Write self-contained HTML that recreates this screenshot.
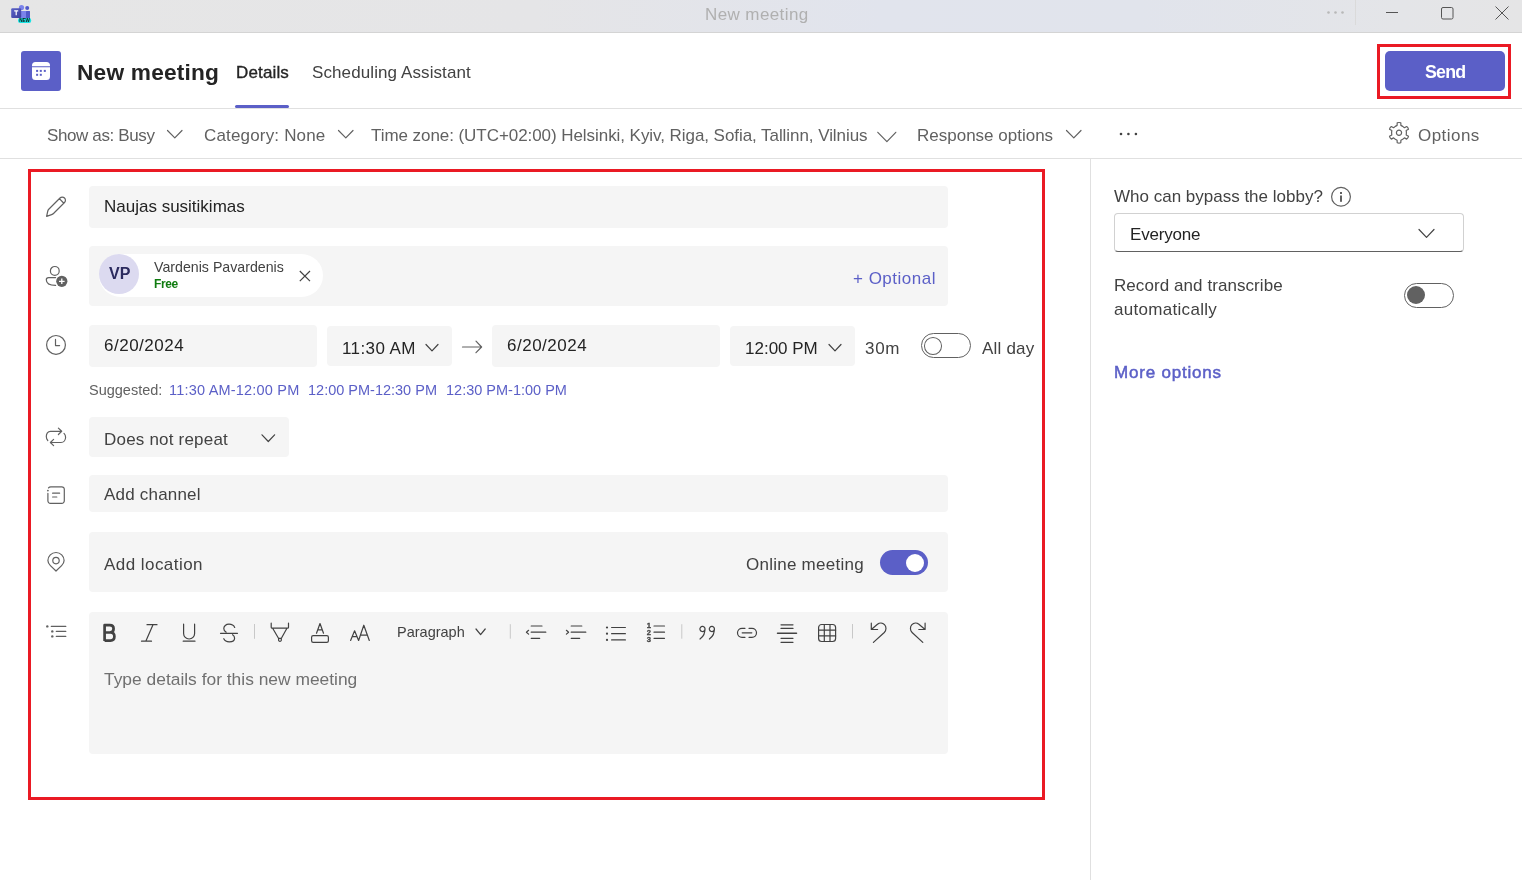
<!DOCTYPE html>
<html><head><meta charset="utf-8">
<style>
*{box-sizing:border-box;margin:0;padding:0}
html,body{-webkit-font-smoothing:antialiased;width:1522px;height:880px;overflow:hidden;background:#fff;font-family:"Liberation Sans",sans-serif;color:#242424}
.a{position:absolute}
.t{position:absolute;white-space:nowrap;line-height:1;will-change:transform}
svg{position:absolute;overflow:visible;left:0;top:0}
.inp{position:absolute;background:#f5f5f5;border-radius:4px}
.tb{font-size:17px;color:#616161;top:127px}
.st{fill:none;stroke:#616161;stroke-width:1.2;stroke-linecap:round;stroke-linejoin:round}
.sd{fill:none;stroke:#424242;stroke-width:1.2;stroke-linecap:round;stroke-linejoin:round}
.lk{font-size:14.5px;color:#5b5fc7;top:383.2px}
</style></head><body>

<!-- title bar -->
<div class="a" style="left:0;top:0;width:1522px;height:33px;background:linear-gradient(90deg,#e6e6e6 0%,#e5e5e7 35%,#e1e4ed 58%,#e1e4ec 75%,#e4e5e8 92%,#e5e5e6 100%);border-bottom:1px solid #d4d4d4"></div>
<div class="t" style="left:705px;top:5.8px;font-size:17px;letter-spacing:0.4px;color:#b0b0b0">New meeting</div>

<svg width="1522" height="880">
  <!-- teams logo -->
  <circle cx="21.5" cy="7.5" r="2.6" fill="#7b83eb"/>
  <circle cx="27.2" cy="8" r="2" fill="#5059c9"/>
  <rect x="20" y="11" width="10" height="7.5" rx="1" fill="#7b83eb"/>
  <rect x="26" y="11" width="4" height="7.5" rx="0.8" fill="#5059c9"/>
  <defs><linearGradient id="tg" x1="0" y1="0" x2="1" y2="1"><stop offset="0" stop-color="#5a62c8"/><stop offset="1" stop-color="#3d3f9c"/></linearGradient></defs><rect x="11.2" y="8.2" width="10" height="9.8" rx="1.2" fill="url(#tg)"/>
  <path d="M14.2 10.8 H18.2 M16.2 10.8 V15.2" stroke="#fff" stroke-width="1.2"/>
  <rect x="18" y="18" width="13.2" height="5" rx="2.2" fill="#19e3e3"/>
  <text x="24.6" y="22.3" font-size="4.6" font-weight="700" text-anchor="middle" fill="#111" font-family="Liberation Sans">NEW</text>

  <!-- window controls -->
  <circle cx="1328.5" cy="12.5" r="1.3" fill="#b8b8b8"/>
  <circle cx="1335.5" cy="12.5" r="1.3" fill="#b8b8b8"/>
  <circle cx="1342.5" cy="12.5" r="1.3" fill="#b8b8b8"/>
  <line x1="1355.5" y1="0" x2="1355.5" y2="25" stroke="#dadada" stroke-width="1"/>
  <line x1="1386" y1="12.5" x2="1398" y2="12.5" stroke="#555" stroke-width="1"/>
  <rect x="1441.5" y="7.5" width="11.5" height="11.5" rx="1.5" fill="none" stroke="#555" stroke-width="1"/>
  <path d="M1495.5 6.5 L1508.5 19.5 M1508.5 6.5 L1495.5 19.5" stroke="#555" stroke-width="1"/>

  <!-- header calendar icon -->
  <rect x="21" y="51" width="40" height="40" rx="3" fill="#5b5fc7"/>
  <path d="M32 66.2 V65.5 A3.5 3.5 0 0 1 35.5 62 H46.5 A3.5 3.5 0 0 1 50 65.5 V66.2 Z" fill="#fff"/>
  <path d="M32 67.2 H50 V76.5 A3.5 3.5 0 0 1 46.5 80 H35.5 A3.5 3.5 0 0 1 32 76.5 Z" fill="#fff"/>
  <g fill="#5b5fc7"><rect x="36.1" y="69.9" width="2" height="2"/><rect x="39.8" y="69.9" width="2" height="2"/><rect x="43.8" y="69.9" width="2" height="2"/><rect x="36.1" y="73.8" width="2" height="2"/><rect x="39.8" y="73.8" width="2" height="2"/></g>

  <!-- toolbar chevrons -->
  <polyline class="st" points="167.5,130.5 174.8,137.8 182,130.5"/>
  <polyline class="st" points="338.5,130.5 345.8,137.8 353,130.5"/>
  <polyline class="st" points="877.8,132.3 886.9,141.6 895.8,132.3"/>
  <polyline class="st" points="1066.5,130.5 1073.8,137.8 1081,130.5"/>
  <circle cx="1121" cy="134" r="1.3" fill="#424242"/>
  <circle cx="1128.4" cy="134" r="1.3" fill="#424242"/>
  <circle cx="1135.9" cy="134" r="1.3" fill="#424242"/>
  <!-- gear -->
  <g transform="translate(1399,132.8)">
    <path class="st" d="M-3.70 -6.41 L-1.9 -7.4 L-1.8 -10.0 Q0 -10.6 1.8 -10.0 L1.9 -7.4 L3.70 -6.41 L5.41 -5.05 L7.7 -6.3 Q9.3 -5.2 9.5 -3.5 L7.2 -2.2 L7.40 0.00 L7.2 2.2 L9.5 3.5 Q9.3 5.2 7.7 6.3 L5.41 5.05 L3.70 6.41 L1.9 7.4 L1.8 10.0 Q0 10.6 -1.8 10.0 L-1.9 7.4 L-3.70 6.41 L-5.41 5.05 L-7.7 6.3 Q-9.3 5.2 -9.5 3.5 L-7.2 2.2 L-7.40 0 L-7.2 -2.2 L-9.5 -3.5 Q-9.3 -5.2 -7.7 -6.3 L-5.41 -5.05 Z"/>
    <circle class="st" cx="0" cy="0" r="2.6"/>
  </g>

  <!-- form icons -->
  <g transform="translate(40,191)"><path class="st" d="M6.6 25.4 L7.8 20 Q8.1 18.9 9 18 L20 7 A3.1 3.1 0 0 1 24.5 11.5 L13.5 22.5 Q12.7 23.3 11.6 23.6 Z M19.6 7.9 L23.6 12"/></g>
  <g transform="translate(40,260)">
    <circle class="st" cx="14.8" cy="10.9" r="4.4"/>
    <path class="st" d="M15.6 17.6 H8.6 C7.2 17.6 6.3 18.5 6.3 19.8 C6.3 23 9.5 25.4 15.6 25.4"/>
    <circle cx="21.8" cy="21.3" r="5.6" fill="#616161"/>
    <path d="M19 21.3 H24.6 M21.8 18.5 V24.1" stroke="#fff" stroke-width="1.3"/>
  </g>
  <g transform="translate(40,330)">
    <circle class="st" cx="16" cy="14.9" r="9.4"/>
    <path class="st" d="M15.5 9.4 V15.6 H19.6"/>
  </g>
  <g transform="translate(40,422)">
    <path class="st" d="M21.5 9.3 H10.5 C7.8 9.3 6.3 11.8 6.3 14.4 C6.3 16 6.9 17.4 7.8 18.5 M18.4 6.1 L21.7 9.3 L18.4 12.5 M10.6 20.5 H21 C23.8 20.5 25.6 18 25.6 15.2 C25.6 13.7 25 12.3 24 11.3 M13.6 17.3 L10.4 20.5 L13.6 23.7"/>
  </g>
  <g transform="translate(40,479)">
    <path class="st" d="M7.9 14.4 V21.8 A2.5 2.5 0 0 0 10.4 24.3 H21.8 A2.5 2.5 0 0 0 24.3 21.8 V10.3 A2.5 2.5 0 0 0 21.8 7.8 H10.9 C9.9 7.8 9 8.2 8.5 8.9 M12.6 14.2 H19.6 M12.6 18 H16.8"/>
    <circle cx="7.9" cy="11.6" r="0.9" fill="#616161"/>
  </g>
  <g transform="translate(40,546)">
    <path class="st" d="M16 25 L10.4 19.6 C8.7 17.9 7.9 16.5 7.9 14.6 A8.1 8.1 0 0 1 24.1 14.6 C24.1 16.5 23.3 17.9 21.6 19.6 Z"/>
    <circle class="st" cx="16" cy="14.6" r="3.2"/>
  </g>
  <g transform="translate(40,615)">
    <circle cx="7.3" cy="11.4" r="1.2" fill="#616161"/><circle cx="12.3" cy="16.4" r="1.2" fill="#616161"/><circle cx="12.3" cy="21.4" r="1.2" fill="#616161"/>
    <path class="st" d="M11.3 11.4 H25.8 M16.3 16.4 H25.8 M16.3 21.4 H25.8" stroke-width="1.1"/>
  </g>
</svg>

<!-- header -->
<div class="t" style="left:77px;top:61.2px;font-size:22.7px;font-weight:700;letter-spacing:0.2px;color:#242424">New meeting</div>
<div class="t" style="left:236px;top:64px;letter-spacing:0.15px;font-size:17px;color:#242424;-webkit-text-stroke:0.35px #242424">Details</div>
<div class="a" style="left:235px;top:105px;width:54px;height:3px;background:#5b5fc7;border-radius:2px"></div>
<div class="t" style="left:312px;top:64px;letter-spacing:0.1px;font-size:17px;color:#424242">Scheduling Assistant</div>
<div class="a" style="left:0;top:108px;width:1522px;height:1px;background:#e0e0e0"></div>

<!-- send -->
<div class="a" style="left:1377px;top:44px;width:134px;height:55px;border:3px solid #ea1a24"></div>
<div class="a" style="left:1385px;top:51px;width:120px;height:40px;background:#5b5fc7;border-radius:5px"></div>
<div class="t" style="left:1425px;top:64px;font-size:17.8px;letter-spacing:-0.8px;font-weight:700;color:#fff">Send</div>

<!-- toolbar -->
<div class="t tb" style="left:47px;letter-spacing:-0.38px">Show as: Busy</div>
<div class="t tb" style="left:204px;letter-spacing:0.17px">Category: None</div>
<div class="t tb" style="left:371px;letter-spacing:-0.06px">Time zone: (UTC+02:00) Helsinki, Kyiv, Riga, Sofia, Tallinn, Vilnius</div>
<div class="t tb" style="left:917px">Response options</div>
<div class="t tb" style="left:1418px;letter-spacing:0.45px">Options</div>
<div class="a" style="left:0;top:158px;width:1522px;height:1px;background:#e0e0e0"></div>
<div class="a" style="left:1090px;top:159px;width:1px;height:721px;background:#e0e0e0"></div>

<!-- form -->
<div class="inp" style="left:89px;top:186px;width:859px;height:42px"></div>
<div class="t" style="left:104px;top:198.4px;font-size:17px;color:#242424">Naujas susitikimas</div>

<div class="inp" style="left:89px;top:246px;width:859px;height:60px"></div>
<div class="a" style="left:99px;top:254px;width:224px;height:43px;background:#fff;border-radius:22px"></div>
<div class="a" style="left:99px;top:254px;width:40px;height:40px;background:#dcdaf0;border-radius:50%"></div>
<div class="t" style="left:109px;top:266px;font-size:16px;font-weight:700;color:#2b2a5e">VP</div>
<div class="t" style="left:154px;top:259.6px;font-size:14.2px;color:#424242">Vardenis Pavardenis</div>
<div class="t" style="left:154px;top:277.6px;font-size:12px;font-weight:700;letter-spacing:-0.4px;color:#107c10">Free</div>
<div class="t" style="left:853px;top:269.6px;font-size:17px;letter-spacing:0.5px;color:#5b5fc7">+ Optional</div>

<div class="inp" style="left:89px;top:325px;width:228px;height:42px"></div>
<div class="t" style="left:104px;top:336.9px;font-size:17px;letter-spacing:0.5px;color:#242424">6/20/2024</div>
<div class="inp" style="left:327px;top:326px;width:125px;height:40px"></div>
<div class="t" style="left:342px;top:339.7px;font-size:17px;letter-spacing:0.4px;color:#242424">11:30 AM</div>
<div class="inp" style="left:492px;top:325px;width:228px;height:42px"></div>
<div class="t" style="left:507px;top:336.9px;font-size:17px;letter-spacing:0.5px;color:#242424">6/20/2024</div>
<div class="inp" style="left:730px;top:326px;width:125px;height:40px"></div>
<div class="t" style="left:745px;top:339.7px;font-size:17px;color:#242424">12:00 PM</div>
<div class="t" style="left:864.6px;top:339.7px;font-size:17px;letter-spacing:0.7px;color:#424242">30m</div>
<div class="a" style="left:921px;top:333px;width:50px;height:25px;border:1px solid #616161;border-radius:13px"></div>
<div class="a" style="left:924px;top:337px;width:18px;height:17.5px;border:1px solid #616161;border-radius:50%"></div>
<div class="t" style="left:982px;top:339.7px;font-size:17px;letter-spacing:0.2px;color:#424242">All day</div>

<div class="t" style="left:88.5px;top:383.2px;font-size:14.5px;color:#616161">Suggested:</div>
<div class="t lk" style="left:169px;letter-spacing:0.2px">11:30 AM-12:00 PM</div>
<div class="t lk" style="left:308.3px">12:00 PM-12:30 PM</div>
<div class="t lk" style="left:446.3px">12:30 PM-1:00 PM</div>

<div class="inp" style="left:89px;top:417px;width:200px;height:40px"></div>
<div class="t" style="left:104px;top:430.9px;font-size:17px;letter-spacing:0.2px;color:#424242">Does not repeat</div>
<div class="inp" style="left:89px;top:475px;width:859px;height:37px"></div>
<div class="t" style="left:104px;top:486.3px;font-size:17px;letter-spacing:0.2px;color:#424242">Add channel</div>
<div class="inp" style="left:89px;top:532px;width:859px;height:60px"></div>
<div class="t" style="left:104px;top:555.6px;font-size:17px;letter-spacing:0.45px;color:#424242">Add location</div>
<div class="t" style="left:745.5px;top:555.6px;font-size:17px;letter-spacing:0.25px;color:#424242">Online meeting</div>
<div class="a" style="left:880px;top:550px;width:48px;height:25px;background:#5b5fc7;border-radius:13px"></div>
<div class="a" style="left:906px;top:553.5px;width:18px;height:18px;background:#fff;border-radius:50%"></div>

<div class="inp" style="left:89px;top:612px;width:859px;height:142px"></div>
<div class="t" style="left:397.3px;top:625.2px;font-size:14.5px;color:#424242">Paragraph</div>
<div class="t" style="left:104px;top:671px;font-size:17.4px;color:#707070">Type details for this new meeting</div>

<!-- right panel -->
<div class="t" style="left:1113.7px;top:187.6px;font-size:17px;color:#424242">Who can bypass the lobby?</div>
<div class="a" style="left:1114px;top:213px;width:350px;height:39px;border:1px solid #d1d1d1;border-bottom-color:#616161;border-radius:4px"></div>
<div class="t" style="left:1130px;top:225.6px;font-size:17px;letter-spacing:-0.2px;color:#242424">Everyone</div>
<div class="t" style="left:1113.7px;top:276.6px;font-size:17px;letter-spacing:0.07px;color:#424242">Record and transcribe</div>
<div class="t" style="left:1113.7px;top:301px;font-size:17px;letter-spacing:0.3px;color:#424242">automatically</div>
<div class="a" style="left:1404px;top:283px;width:50px;height:25px;border:1px solid #616161;border-radius:13px"></div>
<div class="a" style="left:1407px;top:286px;width:18px;height:18px;background:#616161;border-radius:50%"></div>
<div class="t" style="left:1113.7px;top:363.6px;font-size:17px;letter-spacing:0.8px;-webkit-text-stroke:0.5px #5b5fc7;color:#5b5fc7">More options</div>

<svg width="1522" height="880">
  <!-- chip close -->
  <path d="M299.8 271 L310 281.2 M310 271 L299.8 281.2" stroke="#424242" stroke-width="1.2" fill="none"/>
  <!-- time chevrons -->
  <polyline class="sd" points="426,344.5 432,350.8 438,344.5"/>
  <polyline class="sd" points="829,344.5 835,350.8 841,344.5"/>
  <!-- arrow -->
  <path class="st" d="M462.5 347 H481 M476 341.2 L481.6 347 L476 352.7" stroke-width="1.3"/>
  <!-- repeat chevron -->
  <polyline class="sd" points="262,434.8 268.3,441.5 274.6,434.8"/>
  <!-- paragraph chevron -->
  <polyline class="sd" points="476,629 480.6,634.6 485.2,629"/>
  <!-- info icon -->
  <circle class="st" cx="1341" cy="196.8" r="9.4" stroke-width="1.1"/>
  <rect x="1340" y="192" width="2" height="2" fill="#616161"/>
  <rect x="1340" y="195.5" width="2" height="6.3" fill="#616161"/>
  <!-- dropdown chevron -->
  <polyline class="sd" points="1419,229.5 1426.5,237.3 1434,229.5"/>

  <!-- editor toolbar -->
  <g transform="translate(98,618)">
    <path d="M6.6 23 V7.2 H11.8 C14.3 7.2 15.6 8.7 15.6 10.8 C15.6 12.8 14.2 14.5 11.8 14.5 H6.6 M11.8 14.5 H12.5 C15 14.5 16.4 16.3 16.4 18.6 C16.4 21 14.9 22.6 12.5 22.6 H6.6" fill="none" stroke="#424242" stroke-width="2.7" stroke-linejoin="round"/>
    <path class="sd" d="M49 6.7 H59 M43.5 23.2 H53.5 M55 6.7 L47.8 23.2"/>
    <path class="sd" d="M85.6 6.2 V15.5 A5.5 5.5 0 0 0 96.6 15.5 V6.2 M85.2 23.2 H97"/>
    <path class="sd" d="M122.5 15.3 H139.5 M136.7 9.4 C135.8 7.4 133.6 6.2 131 6.2 C127.9 6.2 125.8 8.2 125.8 10.5 C125.8 12 126.6 13.3 128 14.1 M134.6 16.7 C135.9 17.5 136.6 18.7 136.6 20.2 C136.6 22.3 134.6 23.8 131.3 23.8 C128.6 23.8 126.7 22.7 125.8 20.7"/>
  </g>
  <g transform="translate(250,618)">
    <path d="M4.5 6 V20.8" stroke="#c8c8c8" stroke-width="1"/>
    <path class="sd" d="M21.2 5.2 V9.2 A1 1 0 0 0 22.2 10.2 H37.5 A1 1 0 0 0 38.5 9.2 V5.2 M22.8 10.5 L28.5 20.3 H31.4 L36.8 10.5 M28.6 20.3 V22.3 A1.4 1.4 0 0 0 31.3 22.3 V20.3"/>
    <path class="sd" d="M66.5 15.2 L70 5.5 L73.5 15.2 M67.8 11.8 H72.2"/>
    <rect class="sd" x="61.6" y="17.6" width="16.8" height="6.8" rx="1.6"/>
    <path class="sd" d="M100.6 22.5 L104.6 12.8 L108.6 22.5 L113.8 7.2 L119.3 22.5 M102.2 18.6 H107 M110.4 17.2 H117.4"/>
    <path d="M260 6.2 V20.7" transform="translate(0,0)" stroke="none"/>
  </g>
  <g transform="translate(505,618)">
    <path d="M5.3 6.2 V20.7" stroke="#c8c8c8" stroke-width="1"/>
    <path class="sd" d="M26.2 8 H37 M26.2 14.2 H40.8 M26.2 20.3 H34.7 M23.6 12.3 L21.4 14.2 L23.6 16.1"/>
    <path class="sd" d="M66.2 8 H76.8 M66.2 14.2 H80.8 M66.2 20.3 H74.7 M61.4 12.3 L63.6 14.2 L61.4 16.1"/>
    <circle cx="102" cy="9.5" r="1.1" fill="#424242"/><circle cx="102" cy="15.7" r="1.1" fill="#424242"/><circle cx="102" cy="21.9" r="1.1" fill="#424242"/>
    <path class="sd" d="M106.6 9.5 H120.4 M106.6 15.7 H120.4 M106.6 21.9 H120.4"/>
    <text x="143.8" y="10.4" font-size="7.6" font-weight="700" text-anchor="middle" fill="#424242" stroke="#424242" stroke-width="0.3" font-family="Liberation Sans">1</text>
    <text x="143.8" y="17.2" font-size="7.6" font-weight="700" text-anchor="middle" fill="#424242" stroke="#424242" stroke-width="0.3" font-family="Liberation Sans">2</text>
    <text x="143.8" y="24.1" font-size="7.6" font-weight="700" text-anchor="middle" fill="#424242" stroke="#424242" stroke-width="0.3" font-family="Liberation Sans">3</text>
    <path class="sd" d="M149 8 H159.5 M149 14.2 H159.5 M149 20.3 H159.5"/>
    <path d="M176.8 6.2 V20.7" stroke="#c8c8c8" stroke-width="1"/>
  </g>
  <g transform="translate(690,618)">
    <path class="sd" d="M15 10.3 A2.6 2.6 0 1 1 14.9 10 C15.3 14.5 13.5 18.5 10 21 M24.4 10.3 A2.6 2.6 0 1 1 24.3 10 C24.7 14.5 22.9 18.5 19.4 21"/>
    <path class="sd" d="M55 10.3 H52 A4.5 4.5 0 0 0 52 19.3 H55 M59 10.3 H62 A4.5 4.5 0 0 1 62 19.3 H59 M52.2 14.8 H61.8"/>
    <path class="sd" d="M91 6.8 H103 M91 10.4 H103 M91 20.3 H103 M91 24.3 H103"/>
    <path d="M87.5 15.2 H106.5" stroke="#424242" stroke-width="1.5" stroke-linecap="round"/>
    <rect class="sd" x="128.6" y="6.5" width="17" height="17" rx="3"/>
    <path class="sd" d="M134.3 6.5 V23.5 M140 6.5 V23.5 M128.6 12.2 H145.6 M128.6 17.9 H145.6"/>
  </g>
  <g transform="translate(845,615)">
    <path d="M7.5 9 V23.5" stroke="#c8c8c8" stroke-width="1"/>
    <path class="sd" d="M26.3 8.2 V14.5 H32.6 M26.6 14.2 L32.5 9.3 C34.6 7.6 37.6 7.7 39.5 9.7 C41.5 11.8 41.5 15.4 39.3 17.5 L28.4 27.4"/>
    <path class="sd" d="M80.1 8.2 V14.5 H73.8 M79.8 14.2 L73.9 9.3 C71.8 7.6 68.8 7.7 66.9 9.7 C64.9 11.8 64.9 15.4 67.1 17.5 L77.8 27.4"/>
  </g>
</svg>

<!-- red highlight -->
<div class="a" style="left:28px;top:169px;width:1017px;height:631px;border:3px solid #ea1a24"></div>

</body></html>
